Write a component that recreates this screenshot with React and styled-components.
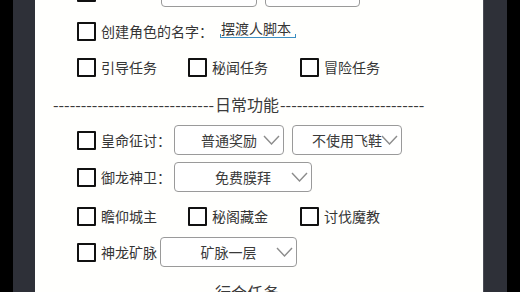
import { createGlobalStyle, styled } from "styled-components";

const GlobalStyle = createGlobalStyle`
  html, body {
    margin: 0;
    padding: 0;
    background: #000;
  }
  body {
    font-family: "Noto Sans CJK SC", "Noto Sans", sans-serif;
  }
`;

const Chevron = () => (
  <ChevronSvg width="17" height="10" viewBox="0 0 17 10">
    <polyline points="1,1 8.5,9 16,1" fill="none" stroke="#8c8c8c" strokeWidth="1.4" />
  </ChevronSvg>
);

const Check = ({ label, checked }) => (
  <CheckItem>
    <Box checked={checked} />
    {label && <Label>{label}</Label>}
  </CheckItem>
);

const Select = ({ value, width, ml }) => (
  <SelectBox width={width} ml={ml}>
    {value}
    <Chevron />
  </SelectBox>
);

const Divider = ({ title, h }) => (
  <DividerRow h={h}>
    {"-".repeat(29)}
    <DividerTitle>{title}</DividerTitle>
    {"-".repeat(26)}
  </DividerRow>
);

const App = () => {
  return (
    <>
      <GlobalStyle />
      <Screen>
        <Frame>
          <Panel>
            <Content>
              {/* row scrolled past the top edge: only its lower border shows */}
              <Row h={40}>
                <Check checked />
                <Select width={96} ml={62} />
                <Select width={95} ml={5} />
              </Row>
              <Row h={38}>
                <Check label="创建角色的名字：" />
                <NameField>
                  <NameInput defaultValue="摆渡人脚本" />
                </NameField>
              </Row>
              <GridRow h={34}>
                <Check label="引导任务" />
                <Check label="秘闻任务" />
                <Check label="冒险任务" />
              </GridRow>
              <Divider title="日常功能" h={40} />
              <Row h={32}>
                <Check label="皇命征讨：" />
                <Select value="普通奖励" width={110} />
                <Select value="不使用飞鞋" width={110} ml={5} />
              </Row>
              <Row h={42}>
                <Check label="御龙神卫：" />
                <Select value="免费膜拜" width={138} />
              </Row>
              <GridRow h={36}>
                <Check label="瞻仰城主" />
                <Check label="秘阁藏金" />
                <Check label="讨伐魔教" />
              </GridRow>
              <Row h={36}>
                <Check label="神龙矿脉" />
                <Select value="矿脉一层" width={137} />
              </Row>
              <Divider title="行会任务" h={44} />
            </Content>
          </Panel>
        </Frame>
      </Screen>
    </>
  );
};

const Screen = styled.div`
  height: 292px;
  padding: 0 13px;
  background: #000;
  display: flex;
`;

const Frame = styled.div`
  flex: 1;
  display: flex;
  padding: 0 23px 0 22px;
  background: #2e3038;
`;

const Panel = styled.div`
  flex: 1;
  overflow: hidden;
  background: #fffffd;
  border-right: 1px solid #4a4c55;
`;

const Content = styled.div`
  margin-top: -28px;
  display: flex;
  flex-direction: column;
  color: #353535;
  font-size: 14px;
`;

const Row = styled.div`
  height: ${(props) => props.h}px;
  display: flex;
  align-items: center;
  gap: 3px;
  padding-left: 42px;
`;

const GridRow = styled.div`
  height: ${(props) => props.h}px;
  display: grid;
  grid-template-columns: 111px 112px auto;
  align-items: center;
  padding-left: 42px;
`;

const CheckItem = styled.div`
  display: flex;
  align-items: center;
`;

const Box = styled.div`
  width: 15px;
  height: 15px;
  border: 2px solid #111;
  border-radius: 1px;
  background: ${(props) => (props.checked ? "#111" : "#fff")};
`;

const Label = styled.span`
  margin-left: 5px;
  line-height: 20px;
  white-space: nowrap;
`;

const SelectBox = styled.div`
  position: relative;
  box-sizing: border-box;
  width: ${(props) => props.width}px;
  height: 30px;
  margin-left: ${(props) => props.ml || 0}px;
  border: 1px solid #9a9a9a;
  border-radius: 4px;
  background: #fff;
  display: flex;
  align-items: center;
  justify-content: center;
  color: #3a3a3a;
  white-space: nowrap;
`;

const ChevronSvg = styled.svg`
  position: absolute;
  right: 3px;
  top: 50%;
  transform: translateY(-50%);
`;

const NameField = styled.div`
  position: relative;
  margin-left: 4px;
  margin-bottom: 6px;
  padding: 0 5px 1px 1px;
  &::after {
    content: "";
    position: absolute;
    left: 0;
    right: 0;
    bottom: 0;
    height: 3px;
    border: 1.5px solid #3b8ec2;
    border-top: none;
  }
`;

const NameInput = styled.input`
  display: block;
  width: 70px;
  border: none;
  outline: none;
  padding: 0;
  background: transparent;
  font-family: inherit;
  font-size: 14px;
  line-height: 18px;
  color: #353535;
`;

const DividerRow = styled.div`
  height: ${(props) => props.h}px;
  display: flex;
  align-items: center;
  padding-left: 18px;
  font-size: 16px;
  color: #3a3a3a;
  white-space: nowrap;
`;

const DividerTitle = styled.span`
  margin: 0 1px;
`;

export default App;
